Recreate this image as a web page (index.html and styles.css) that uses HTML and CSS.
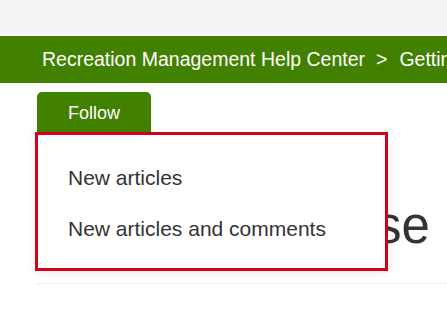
FILE: index.html
```html
<!DOCTYPE html>
<html>
<head>
<meta charset="utf-8">
<link rel="stylesheet" href="styles.css">
</head>
<body>
<div class="topbar"></div>
<nav class="nav">
  <span class="crumb">Recreation Management Help Center</span>
  <span class="sep">&gt;</span>
  <span class="crumb">Getting Started</span>
</nav>
<main class="main">
  <div class="follow-wrap">
    <button class="follow">Follow</button>
    <div class="dropdown">
      <a class="item">New articles</a>
      <a class="item">New articles and comments</a>
    </div>
  </div>
  <h1 class="title">Make a Purchase</h1>
  <hr class="rule">
</main>
</body>
</html>
```
FILE: styles.css
```css
html, body {
  margin: 0;
  padding: 0;
  background: #fff;
  font-family: "Liberation Sans", Arial, sans-serif;
  overflow: hidden;
}
.topbar {
  height: 36px;
  background: #f4f4f4;
}
.nav {
  height: 47px;
  background: #428000;
  color: #fff;
  display: flex;
  align-items: center;
  padding-left: 42px;
  font-size: 19.5px;
  white-space: nowrap;
  overflow: hidden;
}
.sep {
  margin: 0 12px 0 11px;
}
.main {
  padding-left: 37px;
}
.follow-wrap {
  position: relative;
  margin-top: 9px;
  width: 114px;
}
.follow {
  display: block;
  width: 114px;
  height: 40px;
  border: 0;
  padding: 3px 0 0;
  background: #428000;
  color: #fff;
  font-family: inherit;
  font-size: 18px;
  border-radius: 5px 5px 0 0;
}
.dropdown {
  position: absolute;
  top: 100%;
  left: -2px;
  width: 353px;
  height: 139px;
  box-sizing: border-box;
  border: 3px solid #d0011b;
  background: #fff;
  box-shadow: 0 2px 8px rgba(0, 0, 0, 0.08);
  padding: 17px 0 0 30px;
  z-index: 2;
}
.item {
  display: block;
  font-size: 21px;
  line-height: 51px;
  color: #333;
  white-space: nowrap;
}
.title {
  margin: 63px 0 27px;
  font-size: 51px;
  line-height: 61px;
  font-weight: normal;
  color: #333;
  white-space: nowrap;
  word-spacing: -2px;
}
.rule {
  margin: 0;
  border: 0;
  border-top: 1px solid #eee;
}
```
